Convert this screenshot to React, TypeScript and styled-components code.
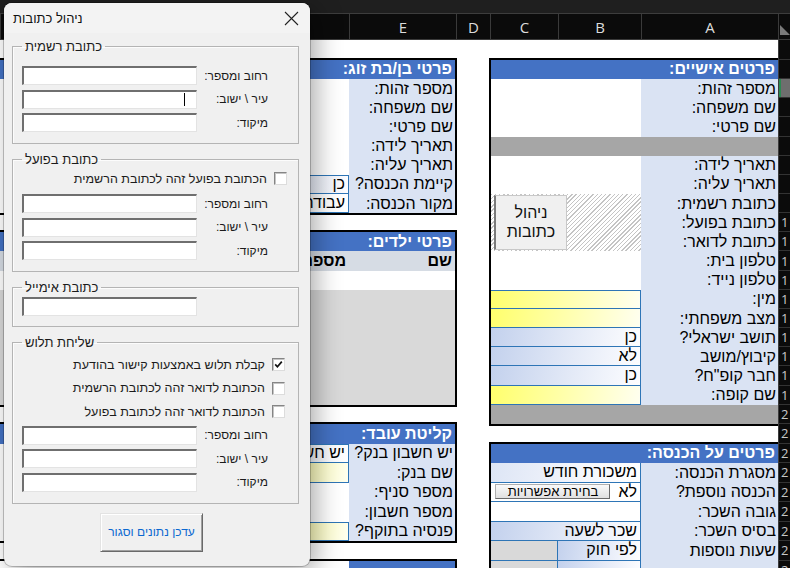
import React from "react";
import styled, { createGlobalStyle } from "styled-components";

const SHEET_FONT = `"Liberation Sans", Arial, "DejaVu Sans", sans-serif`;
const UI_FONT = `"Liberation Sans", Arial, "DejaVu Sans", sans-serif`;
const HEAD_FONT = `"Open Sans", "Noto Sans", "DejaVu Sans", sans-serif`;

const SHEET_TOP = 40;
function rowTop(r: number): number {
  if (r <= 1) return 40;
  if (r <= 21) return 59.9 + (r - 2) * 19.17;
  return 444 + (r - 22) * 19.5;
}
const rowH = (r: number) => rowTop(r + 1) - rowTop(r);
const rowsTpl = (from: number, to: number) =>
  Array.from({ length: to - from + 1 }, (_, i) => `${rowH(from + i).toFixed(3)}px`).join(" ");
const gapBefore = (start: number, prevEnd: number | null) =>
  rowTop(start) - 2 - (prevEnd === null ? SHEET_TOP : rowTop(prevEnd + 1) + 2);

const GlobalStyle = createGlobalStyle`
  html, body { margin: 0; padding: 0; background: #fff; overflow: hidden; }
  #root { width: 790px; height: 568px; }
  *, *::before, *::after { box-sizing: border-box; }
`;

const Screen = styled.div`
  position: relative;
  width: 790px;
  height: 568px;
  overflow: hidden;
  background: #fff;
  font-family: ${SHEET_FONT};
`;

const TopBar = styled.div`
  height: 14px;
  background: #1f1f1f;
  border-bottom: 1px solid #3d3d3d;
`;

const ColHeaderRow = styled.div`
  display: flex;
  direction: rtl;
  height: 26px;
  background: #0b0b0b;
  border-bottom: 1px solid #3a3a3a;
`;

const ColHead = styled.div<{ $w?: number }>`
  ${(p) => (p.$w ? `width: ${p.$w}px; flex: none;` : "flex: 1;")}
  border-left: 1px solid #3a3a3a;
  color: #dcdcdc;
  font-family: ${HEAD_FONT};
  font-size: 15px;
  display: flex;
  align-items: center;
  justify-content: center;
`;

const Corner = styled.div`
  width: 12px;
  flex: none;
  border-left: 1px solid #3a3a3a;
  display: flex;
  align-items: flex-end;
  padding-bottom: 3px;
`;

const SheetBody = styled.div`
  display: flex;
  direction: rtl;
  height: 528px;
  overflow: hidden;
`;

const RowHeads = styled.div`
  width: 12px;
  flex: none;
  display: flex;
  flex-direction: column;
  background: #0b0b0b;
  border-left: 1px solid #3c3c3c;
  direction: ltr;
`;

const RowHead = styled.div<{ $h: number; $sel?: boolean }>`
  height: ${(p) => p.$h}px;
  flex: none;
  border-bottom: 1px solid #333;
  overflow: hidden;
  white-space: nowrap;
  font-family: ${HEAD_FONT};
  font-size: 13px;
  letter-spacing: 4px;
  color: #c8c8c8;
  padding-left: 2px;
  display: flex;
  align-items: center;
  background: ${(p) => (p.$sel ? "#6e6e6e" : "transparent")};
  box-shadow: ${(p) => (p.$sel ? "inset 2px 0 0 #2a8a52" : "none")};
`;

const Group = styled.div<{ $w: number }>`
  width: ${(p) => p.$w}px;
  flex: none;
  display: flex;
  flex-direction: column;
`;

const Spacer = styled.div<{ $w: number }>`
  width: ${(p) => p.$w}px;
  flex: none;
`;

const SheetTable = styled.div<{ $cols: string; $rows: string; $mt: number; $right: number; $left: number; $bottom?: number }>`
  display: grid;
  direction: rtl;
  grid-template-columns: ${(p) => p.$cols};
  grid-template-rows: ${(p) => p.$rows};
  margin-top: ${(p) => p.$mt}px;
  border: 2px solid #000;
  border-right-width: ${(p) => p.$right}px;
  border-left-width: ${(p) => p.$left}px;
  border-bottom-width: ${(p) => (p.$bottom === undefined ? 2 : p.$bottom)}px;
  flex: none;
`;

type Fill = "white" | "yellow" | "blue" | "blueSoft" | "gray" | "dark" | "sub" | "label" | "head";
const fills: Record<Fill, string> = {
  white: "#ffffff",
  yellow: "linear-gradient(100deg, #ffff6c 0%, #ffffa6 45%, #fffff0 100%)",
  blue: "linear-gradient(100deg, #c3d1ed 0%, #e4eaf7 55%, #fdfdff 100%)",
  blueSoft: "linear-gradient(100deg, #dde5f5 0%, #f4f6fc 60%, #ffffff 100%)",
  gray: "#d9d9d9",
  dark: "#a6a6a6",
  sub: "#d6dce4",
  label: "#dae3f3",
  head: "#4472c4",
};

const Cell = styled.div<{ $c: string; $rs?: number; $fill?: Fill; $line?: boolean; $bt?: boolean }>`
  grid-column: ${(p) => p.$c};
  ${(p) => (p.$rs ? `grid-row: span ${p.$rs};` : "")}
  min-width: 0;
  overflow: hidden;
  white-space: nowrap;
  font-family: ${SHEET_FONT};
  font-size: 16px;
  color: #000;
  display: flex;
  align-items: center;
  gap: 8px;
  direction: rtl;
  padding-right: 3px;
  background: ${(p) => fills[p.$fill || "white"]};
  ${(p) => (p.$line ? "border-right: 1px solid #2e75b6; border-bottom: 1px solid #2e75b6;" : "")}
  ${(p) => (p.$bt ? "border-top: 1px solid #2e75b6;" : "")}
`;

const HeadCell = styled(Cell).attrs({ $fill: "head" as Fill })`
  color: #fff;
  font-weight: bold;
`;

const LabelCell = styled(Cell).attrs({ $fill: "label" as Fill })`
  padding-right: 2px;
`;

const SubCell = styled(Cell).attrs({ $fill: "sub" as Fill })`
  font-weight: bold;
`;

const HatchCell = styled(Cell)`
  background: repeating-linear-gradient(135deg, #c4c4c4 0 1px, #ffffff 1px 3px);
  align-items: flex-start;
  justify-content: flex-end;
  padding: 1px 0 0 3px;
`;

const SheetButton = styled.div`
  width: 73px;
  height: 55px;
  background: #f0f0f0;
  border-left: 2px solid #7a7a7a;
  border-top: 1px solid #c8c8c8;
  border-right: 1px solid #c8c8c8;
  border-bottom: 1px solid #c8c8c8;
  font-family: ${SHEET_FONT};
  font-size: 16px;
  line-height: 19px;
  color: #111;
  text-align: center;
  display: flex;
  flex-direction: column;
  justify-content: center;
  direction: rtl;
`;

const PickButton = styled.div`
  width: 115px;
  height: 15px;
  background: linear-gradient(#fafafa, #e0e0e0);
  border: 1px solid #b0b0b0;
  border-right-color: #6a6a6a;
  border-bottom-color: #6a6a6a;
  font-family: ${SHEET_FONT};
  font-size: 13px;
  line-height: 13px;
  color: #000;
  display: flex;
  align-items: center;
  justify-content: center;
`;

/* ---------------- Dialog ---------------- */

const Dialog = styled.div`
  position: absolute;
  left: 4px;
  top: 3px;
  width: 306px;
  height: 563px;
  background: #f0f0f0;
  border-radius: 8px;
  overflow: hidden;
  box-shadow: 0 0 0 1px rgba(0, 0, 0, 0.22), 6px 6px 26px rgba(0, 0, 0, 0.34);
  display: flex;
  flex-direction: column;
  font-family: ${UI_FONT};
`;

const TitleBar = styled.div`
  height: 30px;
  flex: none;
  background: #f3f3f3;
  display: flex;
  align-items: center;
  justify-content: space-between;
  padding: 0 11px 0 9px;
`;

const Title = styled.span`
  direction: rtl;
  font-size: 13px;
  color: #111;
`;

const DialogBody = styled.div`
  display: flex;
  flex-direction: column;
  gap: 8px;
  padding: 6px 11px 0 8px;
`;

const Frame = styled.fieldset<{ $pt: number; $pb: number }>`
  margin: 0;
  min-width: 0;
  padding: ${(p) => p.$pt}px 0 ${(p) => p.$pb}px 0;
  border: 1px solid #b4b4b4;
  box-shadow: inset 1px 1px 0 #fcfcfc;
  display: flex;
  flex-direction: column;
`;

const Legend = styled.legend`
  margin-left: 9px;
  padding: 0 3px;
  font-size: 13px;
  line-height: 15px;
  color: #1b1b1b;
`;

const RtlText = styled.span`
  direction: rtl;
  unicode-bidi: isolate;
`;

const FieldList = styled.div<{ $mt?: number }>`
  display: flex;
  flex-direction: column;
  gap: 4.5px;
  margin-top: ${(p) => p.$mt || 0}px;
`;

const FieldRow = styled.div`
  display: flex;
  align-items: center;
  height: 19px;
  padding-left: 9px;
  padding-right: 30px;
`;

const TextBox = styled.div`
  width: 175px;
  height: 19px;
  flex: none;
  background: #fff;
  border-top: 2px solid #6f6f6f;
  border-left: 2px solid #6f6f6f;
  border-right: 1px solid #e3e3e3;
  border-bottom: 1px solid #e3e3e3;
  display: flex;
  justify-content: flex-end;
  align-items: center;
  padding-right: 11px;
`;

const Caret = styled.span`
  width: 1px;
  height: 13px;
  background: #000;
`;

const FieldLabel = styled.span`
  flex: 1;
  direction: rtl;
  text-align: right;
  font-size: 12px;
  color: #1b1b1b;
`;

const CheckList = styled.div`
  display: flex;
  flex-direction: column;
  gap: 10.5px;
`;

const CheckRow = styled.div<{ $pr: number }>`
  display: flex;
  align-items: center;
  justify-content: flex-end;
  gap: 7px;
  height: 13px;
  padding-right: ${(p) => p.$pr}px;
  font-size: 12.5px;
  color: #1b1b1b;
`;

const CheckBox = styled.span`
  width: 13px;
  height: 13px;
  flex: none;
  background: #fff;
  border: 1px solid;
  border-color: #858585 #dcdcdc #dcdcdc #858585;
  box-shadow: inset 1px 1px 0 #c4c4c4;
  display: flex;
  align-items: center;
  justify-content: center;
`;

const UpdateButton = styled.button`
  margin: 1px 0 0 88px;
  align-self: flex-start;
  width: 103px;
  height: 39px;
  padding: 0;
  background: #f0f0f0;
  color: #0b68d0;
  font-family: ${UI_FONT};
  font-size: 12px;
  direction: rtl;
  border: 1px solid;
  border-color: #e3e3e3 #696969 #696969 #e3e3e3;
  box-shadow: inset 1px 1px 0 #ffffff, inset -1px -1px 0 #a0a0a0;
`;

const Field: React.FC<{ label: string; caret?: boolean }> = ({ label, caret }) => (
  <FieldRow>
    <TextBox>{caret ? <Caret /> : null}</TextBox>
    <FieldLabel>{label}</FieldLabel>
  </FieldRow>
);

const Check: React.FC<{ label: string; checked?: boolean; pr: number }> = ({ label, checked, pr }) => (
  <CheckRow $pr={pr}>
    <RtlText>{label}</RtlText>
    <CheckBox>
      {checked ? (
        <svg width="9" height="9" viewBox="0 0 9 9">
          <path d="M1.2 4.4 L3.4 6.8 L7.8 1.6" fill="none" stroke="#111" strokeWidth="1.7" />
        </svg>
      ) : null}
    </CheckBox>
  </CheckRow>
);

const AddressFields: React.FC<{ caretOnCity?: boolean; mt?: number }> = ({ caretOnCity, mt }) => (
  <FieldList $mt={mt}>
    <Field label="רחוב ומספר:" />
    <Field label="עיר \ ישוב:" caret={caretOnCity} />
    <Field label="מיקוד:" />
  </FieldList>
);

const AddressDialog: React.FC = () => (
  <Dialog>
    <TitleBar>
      <Title>ניהול כתובות</Title>
      <svg width="15" height="15" viewBox="0 0 15 15">
        <path d="M1 1 L14 14 M14 1 L1 14" stroke="#222" strokeWidth="1.1" fill="none" />
      </svg>
    </TitleBar>
    <DialogBody>
      <Frame $pt={12} $pb={11}>
        <Legend>
          <RtlText>כתובת רשמית</RtlText>
        </Legend>
        <AddressFields caretOnCity />
      </Frame>
      <Frame $pt={5} $pb={11}>
        <Legend>
          <RtlText>כתובת בפועל</RtlText>
        </Legend>
        <Check label="הכתובת בפועל זהה לכתובת הרשמית" pr={11} />
        <AddressFields mt={9} />
      </Frame>
      <Frame $pt={2} $pb={10}>
        <Legend>
          <RtlText>כתובת אימייל</RtlText>
        </Legend>
        <FieldRow>
          <TextBox />
        </FieldRow>
      </Frame>
      <Frame $pt={8} $pb={11}>
        <Legend>
          <RtlText>שליחת תלוש</RtlText>
        </Legend>
        <CheckList>
          <Check label="קבלת תלוש באמצעות קישור בהודעת" checked pr={13} />
          <Check label="הכתובת לדואר זהה לכתובת הרשמית" pr={13} />
          <Check label="הכתובת לדואר זהה לכתובת בפועל" pr={13} />
        </CheckList>
        <AddressFields mt={7.5} />
      </Frame>
      <UpdateButton>עדכן נתונים וסגור</UpdateButton>
    </DialogBody>
  </Dialog>
);

/* ---------------- Sheet ---------------- */

const ROWS = Array.from({ length: 28 }, (_, i) => i + 1);

const RowHeader: React.FC = () => (
  <RowHeads>
    {ROWS.map((r) => (
      <RowHead key={r} $h={rowH(r)} $sel={r === 3}>
        {r >= 10 ? r : ""}
      </RowHead>
    ))}
  </RowHeads>
);

const L: React.FC<{ children?: React.ReactNode }> = ({ children }) => <LabelCell $c="1">{children}</LabelCell>;

const RightTables: React.FC = () => (
  <Group $w={289}>
    <SheetTable $cols="137px 83px 67px" $rows={rowsTpl(2, 20)} $mt={gapBefore(2, null)} $right={0} $left={2}>
      <HeadCell $c="1 / -1">פרטים אישיים:</HeadCell>
      <L>מספר זהות:</L>
      <Cell $c="2 / 4" />
      <L>שם משפחה:</L>
      <Cell $c="2 / 4" />
      <L>שם פרטי:</L>
      <Cell $c="2 / 4" />
      <Cell $c="1 / -1" $fill="dark" />
      <L>תאריך לידה:</L>
      <Cell $c="2 / 4" />
      <L>תאריך עליה:</L>
      <Cell $c="2 / 4" />
      <L>כתובת רשמית:</L>
      <HatchCell $c="2 / 4" $rs={3}>
        <SheetButton>
          <span>ניהול</span>
          <span>כתובות</span>
        </SheetButton>
      </HatchCell>
      <L>כתובת בפועל:</L>
      <L>כתובת לדואר:</L>
      <L>טלפון בית:</L>
      <Cell $c="2 / 4" />
      <L>טלפון נייד:</L>
      <Cell $c="2 / 4" />
      <L>מין:</L>
      <Cell $c="2 / 4" $fill="yellow" $line $bt />
      <L>מצב משפחתי:</L>
      <Cell $c="2 / 4" $fill="yellow" $line />
      <L>תושב ישראלי?</L>
      <Cell $c="2 / 4" $fill="blue" $line>
        כן
      </Cell>
      <L>קיבוץ/מושב</L>
      <Cell $c="2 / 4" $fill="blue" $line>
        לא
      </Cell>
      <L>חבר קופ"ח?</L>
      <Cell $c="2 / 4" $fill="blue" $line>
        כן
      </Cell>
      <L>שם קופה:</L>
      <Cell $c="2 / 4" $fill="yellow" $line />
      <Cell $c="1 / -1" $fill="dark" />
    </SheetTable>

    <SheetTable $cols="137px 83px 67px" $rows={rowsTpl(22, 28)} $mt={gapBefore(22, 20)} $right={0} $left={2} $bottom={0}>
      <HeadCell $c="1 / -1">פרטים על הכנסה:</HeadCell>
      <L>מסגרת הכנסה:</L>
      <Cell $c="2 / 4" $fill="blueSoft" $line>
        משכורת חודש
      </Cell>
      <L>הכנסה נוספת?</L>
      <Cell $c="2 / 4" $line>
        לא
        <PickButton>בחירת אפשרויות</PickButton>
      </Cell>
      <L>גובה השכר:</L>
      <Cell $c="2 / 4" $line />
      <L>בסיס השכר:</L>
      <Cell $c="2 / 4" $fill="blue" $line>
        שכר לשעה
      </Cell>
      <L>שעות נוספות</L>
      <Cell $c="2" $fill="blue" $line>
        לפי חוק
      </Cell>
      <Cell $c="3" $fill="gray" $line />
      <L />
      <Cell $c="2" $fill="blue" $line />
      <Cell $c="3" $fill="gray" $line />
    </SheetTable>
  </Group>
);

const LEFT_COLS = "106px 109px 1fr";

const LeftTables: React.FC = () => (
  <Group $w={457}>
    <SheetTable $cols={LEFT_COLS} $rows={rowsTpl(2, 9)} $mt={gapBefore(2, null)} $right={2} $left={0}>
      <HeadCell $c="1 / -1">פרטי בן/בת זוג:</HeadCell>
      <L>מספר זהות:</L>
      <Cell $c="2 / -1" />
      <L>שם משפחה:</L>
      <Cell $c="2 / -1" />
      <L>שם פרטי:</L>
      <Cell $c="2 / -1" />
      <L>תאריך לידה:</L>
      <Cell $c="2 / -1" />
      <L>תאריך עליה:</L>
      <Cell $c="2 / -1" />
      <L>קיימת הכנסה?</L>
      <Cell $c="2" $fill="blue" $line $bt>
        כן
      </Cell>
      <Cell $c="3" />
      <L>מקור הכנסה:</L>
      <Cell $c="2" $line>
        עבודה
      </Cell>
      <Cell $c="3" />
    </SheetTable>

    <SheetTable $cols={LEFT_COLS} $rows={rowsTpl(11, 19)} $mt={gapBefore(11, 9)} $right={2} $left={0}>
      <HeadCell $c="1 / -1">פרטי ילדים:</HeadCell>
      <SubCell $c="1">שם</SubCell>
      <SubCell $c="2">מספר זהות</SubCell>
      <SubCell $c="3" />
      <Cell $c="1 / -1" />
      <Cell $c="1 / -1" $rs={6} $fill="gray" />
    </SheetTable>

    <SheetTable $cols={LEFT_COLS} $rows={rowsTpl(21, 26)} $mt={gapBefore(21, 19)} $right={2} $left={0}>
      <HeadCell $c="1 / -1">קליטת עובד:</HeadCell>
      <L>יש חשבון בנק?</L>
      <Cell $c="2" $fill="blueSoft" $line $bt>
        יש חשבון
      </Cell>
      <Cell $c="3" />
      <L>שם בנק:</L>
      <Cell $c="2" $fill="yellow" $line />
      <Cell $c="3" />
      <L>מספר סניף:</L>
      <Cell $c="2 / -1" />
      <L>מספר חשבון:</L>
      <Cell $c="2 / -1" />
      <L>פנסיה בתוקף?</L>
      <Cell $c="2" $fill="yellow" $line $bt />
      <Cell $c="3" />
    </SheetTable>

    <SheetTable $cols={LEFT_COLS} $rows={rowsTpl(28, 28)} $mt={gapBefore(28, 26)} $right={2} $left={0} $bottom={0}>
      <HeadCell $c="1" />
      <Cell $c="2 / -1" />
    </SheetTable>
  </Group>
);

export default function App() {
  return (
    <>
      <GlobalStyle />
      <Screen>
        <TopBar />
        <ColHeaderRow>
          <Corner>
            <svg width="11" height="12" viewBox="0 0 11 12">
              <polygon points="1,1 1,11 11,11" fill="#7a7a7a" />
            </svg>
          </Corner>
          <ColHead $w={137}>A</ColHead>
          <ColHead $w={83}>B</ColHead>
          <ColHead $w={68}>C</ColHead>
          <ColHead $w={34}>D</ColHead>
          <ColHead $w={107}>E</ColHead>
          <ColHead>F</ColHead>
        </ColHeaderRow>
        <SheetBody>
          <RowHeader />
          <RightTables />
          <Spacer $w={32} />
          <LeftTables />
        </SheetBody>
        <AddressDialog />
      </Screen>
    </>
  );
}
